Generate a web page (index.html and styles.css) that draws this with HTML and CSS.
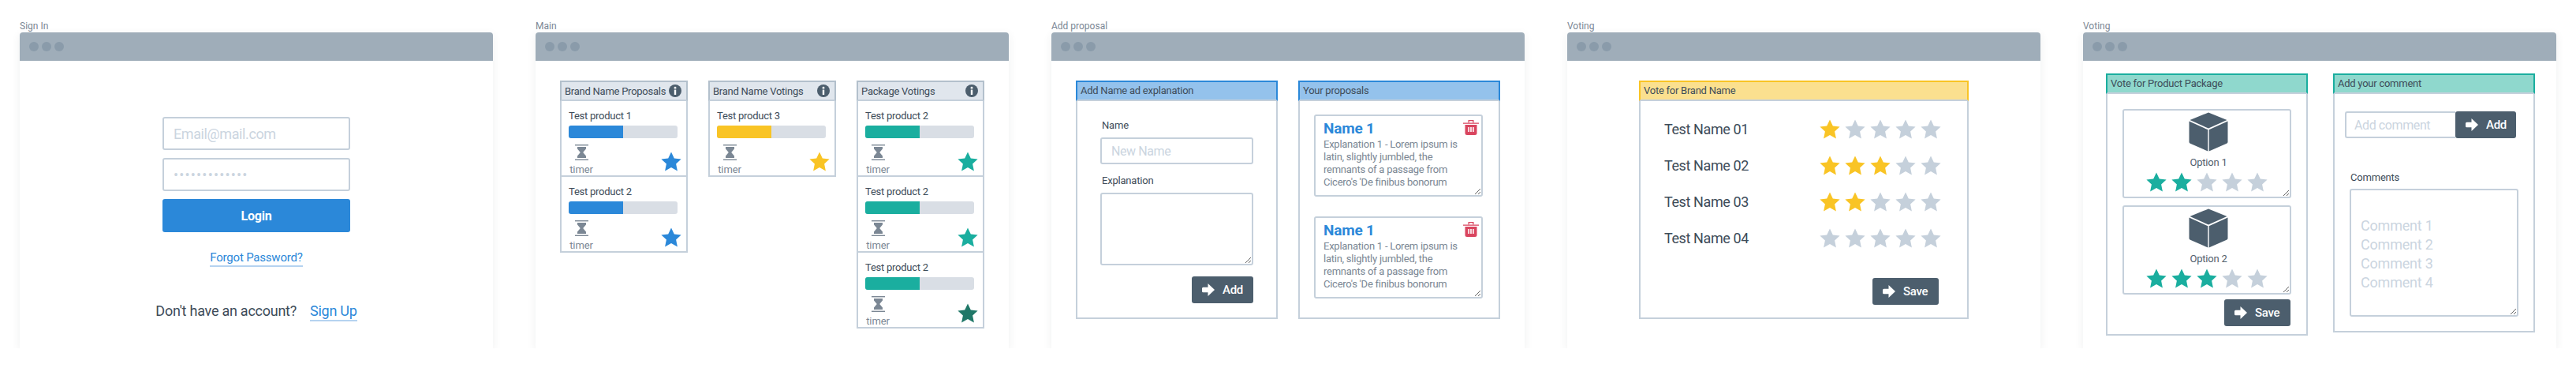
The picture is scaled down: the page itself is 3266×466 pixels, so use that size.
FILE: index.html
```html
<!DOCTYPE html>
<html lang="en">
<head>
  <meta charset="UTF-8">
  <meta name="viewport" content="width=device-width, initial-scale=1.0">
  <title>Wireframes</title>
  <link rel="stylesheet" href="styles.css">
</head>
<body>
  <svg class="sprite" aria-hidden="true">
    <symbol id="star" viewBox="0 0 26 25">
      <path d="M13 0.5 L16.8 8.5 L25.6 9.6 L19.1 15.6 L20.9 24.4 L13 20 L5.1 24.4 L6.9 15.6 L0.4 9.6 L9.2 8.5 Z"/>
    </symbol>
    <symbol id="hourglass" viewBox="0 0 17 20">
      <rect x="0" y="0" width="17" height="1.4"/>
      <rect x="0" y="18.6" width="17" height="1.4"/>
      <path d="M3 3 H14 V5.5 L10.2 10 L14 14.5 V17 H3 V14.5 L6.8 10 L3 5.5 Z"/>
    </symbol>
    <symbol id="arrow" viewBox="0 0 16 16">
      <path d="M1.5 4.8 H7.5 V0 L16 8 L7.5 16 V11.2 H1.5 Q0 11.2 0 9.7 V6.3 Q0 4.8 1.5 4.8 Z"/>
    </symbol>
    <symbol id="info" viewBox="0 0 16 16">
      <circle cx="8" cy="8" r="8" fill="#4c5e6d"/>
      <circle cx="8" cy="4.2" r="1.4" fill="#fff"/>
      <rect x="6.8" y="6.6" width="2.4" height="6.4" fill="#fff"/>
    </symbol>
    <symbol id="trash" viewBox="0 0 20 20">
      <path d="M0 4.5 H20 V5.8 H0 Z"/>
      <path d="M6.5 4.5 V1 H13.5 V4.5 H12.2 V2.2 H7.8 V4.5 Z"/>
      <path d="M2.5 7 H17.5 V17.5 Q17.5 20 15 20 H5 Q2.5 20 2.5 17.5 Z"/>
      <rect x="6.3" y="10" width="1.6" height="6" fill="#fff"/>
      <rect x="9.2" y="10" width="1.6" height="6" fill="#fff"/>
      <rect x="12.1" y="10" width="1.6" height="6" fill="#fff"/>
    </symbol>
    <symbol id="cube" viewBox="0 0 50 50">
      <path d="M25 0.5 L48.5 10 L25 20.6 L1.5 10 Z"/>
      <path d="M0.5 11.6 L24.3 22.3 V49.5 L2 39.8 Q0.5 39.2 0.5 37.7 Z"/>
      <path d="M49.5 11.6 L25.7 22.3 V49.5 L48 39.8 Q49.5 39.2 49.5 37.7 Z"/>
    </symbol>
  </svg>

  <div class="page">
    <section class="shot">
      <div class="shot-label">Sign In</div>
      <div class="window">
        <div class="titlebar"><i></i><i></i><i></i></div>
        <div class="window-body login">
          <input class="field login-field" type="text" placeholder="Email@mail.com">
          <input class="field login-field pass-field" type="text" placeholder="•••••••••••••">
          <button class="login-btn">Login</button>
          <a class="link forgot">Forgot Password?</a>
          <div class="signup"><span>Don't have an account?</span><a class="link">Sign Up</a></div>
        </div>
      </div>
    </section>

    <section class="shot">
      <div class="shot-label">Main</div>
      <div class="window">
        <div class="titlebar"><i></i><i></i><i></i></div>
        <div class="window-body board">
          <div class="column">
            <div class="column-head"><span>Brand Name Proposals</span><svg class="info"><use href="#info"/></svg></div>
            <div class="item blue">
              <div class="item-name">Test product 1</div>
              <div class="bar"><div class="bar-fill"></div></div>
              <div class="item-foot">
                <div class="timer"><svg class="hourglass"><use href="#hourglass"/></svg><span>timer</span></div>
                <svg class="star"><use href="#star"/></svg>
              </div>
            </div>
            <div class="item blue">
              <div class="item-name">Test product 2</div>
              <div class="bar"><div class="bar-fill"></div></div>
              <div class="item-foot">
                <div class="timer"><svg class="hourglass"><use href="#hourglass"/></svg><span>timer</span></div>
                <svg class="star"><use href="#star"/></svg>
              </div>
            </div>
          </div>
          <div class="column">
            <div class="column-head"><span>Brand Name Votings</span><svg class="info"><use href="#info"/></svg></div>
            <div class="item yellow">
              <div class="item-name">Test product 3</div>
              <div class="bar"><div class="bar-fill"></div></div>
              <div class="item-foot">
                <div class="timer"><svg class="hourglass"><use href="#hourglass"/></svg><span>timer</span></div>
                <svg class="star"><use href="#star"/></svg>
              </div>
            </div>
          </div>
          <div class="column">
            <div class="column-head"><span>Package Votings</span><svg class="info"><use href="#info"/></svg></div>
            <div class="item green">
              <div class="item-name">Test product 2</div>
              <div class="bar"><div class="bar-fill"></div></div>
              <div class="item-foot">
                <div class="timer"><svg class="hourglass"><use href="#hourglass"/></svg><span>timer</span></div>
                <svg class="star"><use href="#star"/></svg>
              </div>
            </div>
            <div class="item green">
              <div class="item-name">Test product 2</div>
              <div class="bar"><div class="bar-fill"></div></div>
              <div class="item-foot">
                <div class="timer"><svg class="hourglass"><use href="#hourglass"/></svg><span>timer</span></div>
                <svg class="star"><use href="#star"/></svg>
              </div>
            </div>
            <div class="item green done">
              <div class="item-name">Test product 2</div>
              <div class="bar"><div class="bar-fill"></div></div>
              <div class="item-foot">
                <div class="timer"><svg class="hourglass"><use href="#hourglass"/></svg><span>timer</span></div>
                <svg class="star"><use href="#star"/></svg>
              </div>
            </div>
          </div>
        </div>
      </div>
    </section>

    <section class="shot">
      <div class="shot-label">Add proposal</div>
      <div class="window">
        <div class="titlebar"><i></i><i></i><i></i></div>
        <div class="window-body proposal">
          <div class="panel panel-blue">
            <div class="panel-head">Add Name ad explanation</div>
            <div class="panel-body add-form">
              <label class="form-label">Name</label>
              <input class="field name-field" type="text" placeholder="New Name">
              <label class="form-label explain-label">Explanation</label>
              <textarea class="field explain-field"></textarea>
              <button class="btn add-btn"><svg class="arrow"><use href="#arrow"/></svg>Add</button>
            </div>
          </div>
          <div class="panel panel-blue">
            <div class="panel-head">Your proposals</div>
            <div class="panel-body proposal-list">
              <div class="card">
                <svg class="trash"><use href="#trash"/></svg>
                <div class="card-title">Name 1</div>
                <p class="card-text">Explanation 1 - Lorem ipsum is<br>latin, slightly jumbled, the<br>remnants of a passage from<br>Cicero's 'De finibus bonorum</p>
              </div>
              <div class="card">
                <svg class="trash"><use href="#trash"/></svg>
                <div class="card-title">Name 1</div>
                <p class="card-text">Explanation 1 - Lorem ipsum is<br>latin, slightly jumbled, the<br>remnants of a passage from<br>Cicero's 'De finibus bonorum</p>
              </div>
            </div>
          </div>
        </div>
      </div>
    </section>

    <section class="shot">
      <div class="shot-label">Voting</div>
      <div class="window">
        <div class="titlebar"><i></i><i></i><i></i></div>
        <div class="window-body voting">
          <div class="panel panel-yellow vote-panel">
            <div class="panel-head">Vote for Brand Name</div>
            <div class="panel-body vote-list">
              <div class="vote-row">
                <span>Test Name 01</span>
                <div class="stars yellow"><svg class="star on"><use href="#star"/></svg><svg class="star"><use href="#star"/></svg><svg class="star"><use href="#star"/></svg><svg class="star"><use href="#star"/></svg><svg class="star"><use href="#star"/></svg></div>
              </div>
              <div class="vote-row">
                <span>Test Name 02</span>
                <div class="stars yellow"><svg class="star on"><use href="#star"/></svg><svg class="star on"><use href="#star"/></svg><svg class="star on"><use href="#star"/></svg><svg class="star"><use href="#star"/></svg><svg class="star"><use href="#star"/></svg></div>
              </div>
              <div class="vote-row">
                <span>Test Name 03</span>
                <div class="stars yellow"><svg class="star on"><use href="#star"/></svg><svg class="star on"><use href="#star"/></svg><svg class="star"><use href="#star"/></svg><svg class="star"><use href="#star"/></svg><svg class="star"><use href="#star"/></svg></div>
              </div>
              <div class="vote-row">
                <span>Test Name 04</span>
                <div class="stars yellow"><svg class="star"><use href="#star"/></svg><svg class="star"><use href="#star"/></svg><svg class="star"><use href="#star"/></svg><svg class="star"><use href="#star"/></svg><svg class="star"><use href="#star"/></svg></div>
              </div>
              <button class="btn save-btn vote-save"><svg class="arrow"><use href="#arrow"/></svg>Save</button>
            </div>
          </div>
        </div>
      </div>
    </section>

    <section class="shot">
      <div class="shot-label">Voting</div>
      <div class="window">
        <div class="titlebar"><i></i><i></i><i></i></div>
        <div class="window-body package">
          <div class="panel panel-green package-panel">
            <div class="panel-head">Vote for Product Package</div>
            <div class="panel-body package-list">
              <div class="option">
                <svg class="cube"><use href="#cube"/></svg>
                <div class="option-name">Option 1</div>
                <div class="stars green"><svg class="star on"><use href="#star"/></svg><svg class="star on"><use href="#star"/></svg><svg class="star"><use href="#star"/></svg><svg class="star"><use href="#star"/></svg><svg class="star"><use href="#star"/></svg></div>
              </div>
              <div class="option">
                <svg class="cube"><use href="#cube"/></svg>
                <div class="option-name">Option 2</div>
                <div class="stars green"><svg class="star on"><use href="#star"/></svg><svg class="star on"><use href="#star"/></svg><svg class="star on"><use href="#star"/></svg><svg class="star"><use href="#star"/></svg><svg class="star"><use href="#star"/></svg></div>
              </div>
              <button class="btn save-btn package-save"><svg class="arrow"><use href="#arrow"/></svg>Save</button>
            </div>
          </div>
          <div class="panel panel-green comment-panel">
            <div class="panel-head">Add your comment</div>
            <div class="panel-body comment-form">
              <div class="comment-add">
                <input class="field comment-field" type="text" placeholder="Add comment">
                <button class="btn comment-btn"><svg class="arrow"><use href="#arrow"/></svg>Add</button>
              </div>
              <label class="form-label comment-label">Comments</label>
              <textarea class="field comment-box" placeholder="Comment 1&#10;Comment 2&#10;Comment 3&#10;Comment 4"></textarea>
            </div>
          </div>
        </div>
      </div>
    </section>
  </div>
</body>
</html>
```

FILE: styles.css
```css
* {
  box-sizing: border-box;
}
body {
  margin: 0;
  background: #fff;
  color: #3e4c59;
  font-family: Roboto, "Liberation Sans", sans-serif;
  font-size: 13px;
}
.sprite {
  display: none;
}
svg {
  display: block;
  fill: currentColor;
}
.page {
  display: flex;
  gap: 54px;
  padding: 26px 25px 0;
}

/* window frame */
.shot {
  width: 600px;
  flex: none;
}
.shot-label {
  height: 15px;
  line-height: 15px;
  font-size: 12px;
  color: #7b8794;
}
.window {
  display: flex;
  flex-direction: column;
  height: 400px;
  background: #fff;
  border-radius: 4px 4px 0 0;
  box-shadow: 0 3px 12px rgba(50, 60, 70, 0.08);
}
.titlebar {
  display: flex;
  align-items: center;
  gap: 4px;
  height: 36px;
  padding-left: 12px;
  background: #9fadb9;
  border-radius: 4px 4px 0 0;
}
.titlebar i {
  width: 12px;
  height: 12px;
  background: #8a9baa;
  border-radius: 50%;
}
.window-body {
  flex: 1;
}

/* form bits */
.field {
  display: block;
  border: 2px solid #c5d0db;
  border-radius: 3px;
  background: #fff;
  font-family: inherit;
  color: #3e4c59;
  outline: none;
}
.field::placeholder {
  color: #cbd5df;
  opacity: 1;
}
.form-label {
  display: block;
  height: 16px;
  line-height: 16px;
  margin: 0 0 7px 2px;
  font-size: 13px;
  letter-spacing: -0.2px;
  color: #3e4c59;
}
.link {
  display: inline-block;
  color: #2b88d9;
  border-bottom: 2px solid #b5d3f0;
}
.btn {
  display: flex;
  align-items: center;
  gap: 10px;
  height: 34px;
  padding: 0 0 0 13px;
  border: 0;
  border-radius: 3px;
  background: #4c5e6d;
  color: #fff;
  font-family: inherit;
  font-size: 15px;
  font-weight: 500;
  letter-spacing: -0.3px;
}
.arrow {
  width: 16px;
  height: 16px;
}

/* sign in */
.login {
  display: flex;
  flex-direction: column;
  align-items: center;
  padding-top: 71px;
}
.login-field {
  width: 238px;
  height: 42px;
  margin-bottom: 10px;
  padding: 0 12px;
  font-size: 18px;
  letter-spacing: -0.4px;
}
.pass-field {
  letter-spacing: 1.2px;
}
.login-btn {
  width: 238px;
  height: 42px;
  border: 0;
  border-radius: 3px;
  background: #2b88d9;
  color: #fff;
  font-family: inherit;
  font-size: 16px;
  font-weight: 700;
  letter-spacing: -0.2px;
}
.forgot {
  margin-top: 23px;
  line-height: 19px;
  font-size: 15px;
  letter-spacing: -0.2px;
}
.signup {
  display: flex;
  gap: 17px;
  margin-top: 45px;
  line-height: 22px;
  font-size: 18px;
  letter-spacing: -0.25px;
}

/* main board */
.board {
  display: flex;
  align-items: flex-start;
  gap: 26px;
  padding: 25px 31px 0;
}
.column {
  width: 162px;
}
.column-head {
  display: flex;
  align-items: center;
  justify-content: space-between;
  height: 26px;
  padding: 0 6px 0 4px;
  background: #e0e6ed;
  border: 2px solid #b3c0cc;
  border-bottom-color: #c5d0db;
  font-size: 13px;
  letter-spacing: -0.25px;
}
.info {
  width: 16px;
  height: 16px;
}
.item {
  height: 96px;
  padding: 11px 6px 0 9px;
  border: 2px solid #c5d0db;
  border-top: 0;
}
.item-name {
  height: 16px;
  line-height: 16px;
  font-size: 13px;
  letter-spacing: -0.25px;
}
.bar {
  width: 138px;
  height: 16px;
  margin-top: 4px;
  background: #d9dee5;
  border-radius: 3px;
  overflow: hidden;
}
.bar-fill {
  width: 50%;
  height: 100%;
}
.item-foot {
  display: flex;
  align-items: flex-end;
  justify-content: space-between;
  margin-top: 8px;
}
.timer {
  display: flex;
  flex-direction: column;
  align-items: center;
  width: 32px;
  color: #7b8794;
  font-size: 13px;
  line-height: 14px;
  letter-spacing: -0.1px;
}
.hourglass {
  width: 17px;
  height: 20px;
  margin-bottom: 5px;
}
.star {
  width: 26px;
  height: 25px;
  flex: none;
}
.item-foot .star {
  margin-bottom: 5px;
}
.item.blue .bar-fill { background: #2b88d9; }
.item.blue .star { color: #2b88d9; }
.item.yellow .bar-fill { background: #f9c425; }
.item.yellow .star { color: #f9c425; }
.item.green .bar-fill { background: #1aae9f; }
.item.green .star { color: #1aae9f; }
.item.green.done .star { color: #207868; }

/* panels */
.panel {
  display: flex;
  flex-direction: column;
  width: 256px;
}
.panel-head {
  height: 26px;
  padding-left: 4px;
  line-height: 22px;
  border: 2px solid;
  border-bottom-color: #c5d0db;
  font-size: 13px;
  letter-spacing: -0.25px;
}
.panel-blue .panel-head { background: #94c2ec; border-color: #2b88d9 #2b88d9 #c5d0db; }
.panel-yellow .panel-head { background: #fbe08f; border-color: #f9c425 #f9c425 #c5d0db; }
.panel-green .panel-head { background: #8fd8cd; border-color: #1aae9f #1aae9f #c5d0db; }
.panel-body {
  flex: 1;
  border: 2px solid #c5d0db;
  border-top: 0;
}

/* add proposal */
.proposal {
  display: flex;
  gap: 26px;
  padding: 25px 31px 37px;
}
.add-form {
  padding: 23px 29px 0;
}
.name-field {
  width: 194px;
  height: 34px;
  padding: 0 12px;
  font-size: 16px;
  letter-spacing: -0.4px;
}
.explain-label {
  margin-top: 13px;
}
.explain-field {
  width: 194px;
  height: 92px;
}
.add-btn {
  width: 78px;
  margin: 14px 0 0 auto;
}
.proposal-list {
  padding: 17px 20px 0 18px;
}
.card {
  position: relative;
  height: 104px;
  padding: 4px 0 0 10px;
  border: 2px solid #c5d0db;
  border-radius: 3px;
  overflow: hidden;
  resize: both;
}
.card + .card {
  margin-top: 25px;
}
.card-title {
  height: 24px;
  line-height: 24px;
  font-size: 19px;
  font-weight: 700;
  letter-spacing: -0.2px;
  color: #2b88d9;
}
.card-text {
  margin: 0;
  line-height: 16px;
  font-size: 13px;
  letter-spacing: -0.25px;
  white-space: nowrap;
  color: #7b8794;
}
.trash {
  position: absolute;
  top: 4px;
  right: 3px;
  width: 20px;
  height: 20px;
  color: #d9455f;
}

/* voting */
.voting {
  display: flex;
  justify-content: center;
  padding: 25px 0 37px;
}
.vote-panel {
  width: 418px;
}
.vote-list {
  padding: 12px 33px 0 30px;
}
.vote-row {
  display: flex;
  align-items: center;
  justify-content: space-between;
  height: 46px;
  font-size: 18px;
  letter-spacing: -0.4px;
}
.stars {
  display: flex;
  gap: 6px;
  color: #c5d0db;
}
.stars.yellow .on { color: #f9c425; }
.stars.green .on { color: #1aae9f; }
.save-btn {
  width: 84px;
}
.vote-save {
  margin: 28px 3px 0 auto;
}

/* package voting */
.package {
  display: flex;
  align-items: flex-start;
  gap: 32px;
  padding: 16px 27px 0 29px;
}
.package-panel {
  height: 332px;
}
.comment-panel {
  height: 328px;
}
.package-list {
  padding: 19px 19px 0;
}
.option {
  display: flex;
  flex-direction: column;
  align-items: center;
  height: 113px;
  padding-top: 2px;
  border: 2px solid #c5d0db;
  border-radius: 3px;
  overflow: hidden;
  resize: both;
}
.option + .option {
  margin-top: 9px;
}
.cube {
  width: 50px;
  height: 50px;
  margin-left: 4px;
  color: #4c5e6d;
}
.option-name {
  height: 16px;
  margin: 6px 0 4px 4px;
  line-height: 16px;
  font-size: 13px;
  letter-spacing: -0.2px;
  color: #52606d;
}
.package-save {
  margin: 6px 1px 0 auto;
}
.comment-form {
  padding: 22px 0 0 13px;
}
.comment-add {
  display: flex;
}
.comment-field {
  width: 140px;
  height: 34px;
  padding: 0 10px;
  border-right: 0;
  border-radius: 3px 0 0 3px;
  font-size: 16px;
  letter-spacing: -0.4px;
}
.comment-btn {
  width: 77px;
}
.comment-label {
  margin: 42px 0 6px 7px;
}
.comment-box {
  width: 214px;
  height: 162px;
  margin-left: 6px;
  padding: 33px 12px 0;
  line-height: 24px;
  font-size: 18px;
  letter-spacing: -0.2px;
}
```
